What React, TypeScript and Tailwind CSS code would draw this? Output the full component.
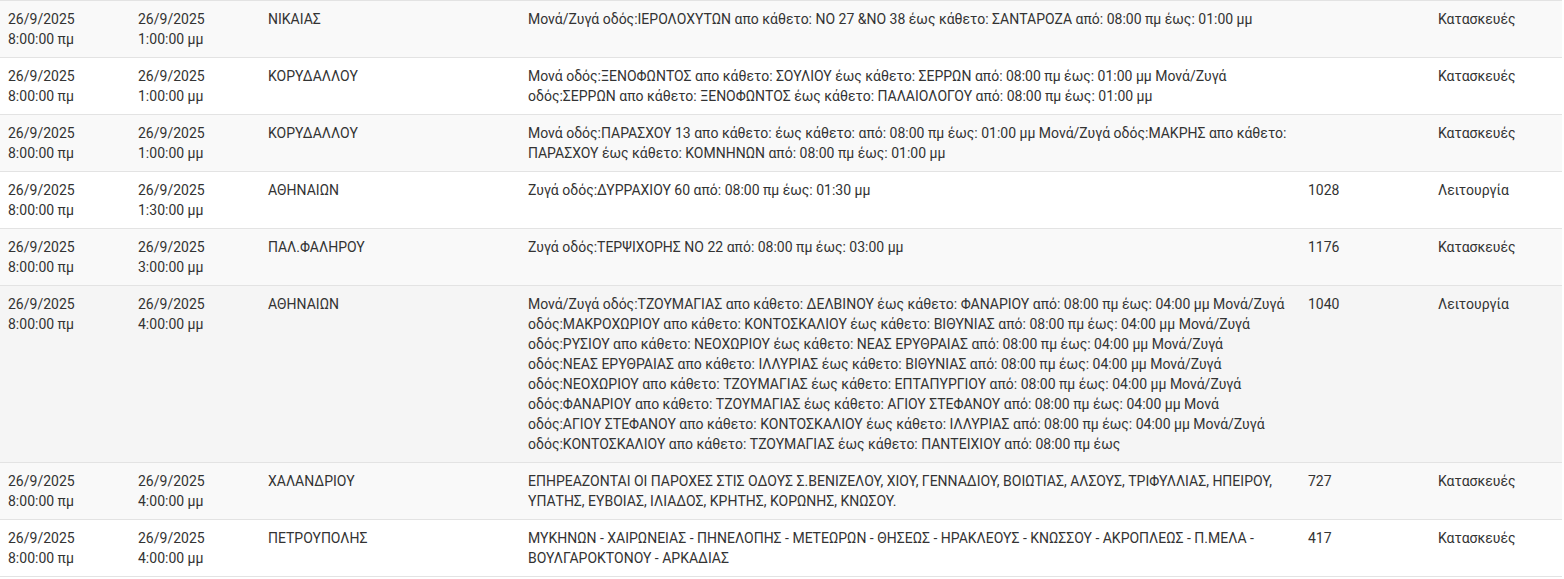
interface Outage {
    start: string;
    end: string;
    area: string;
    description: string;
    code: string;
    reason: string;
}

const outages: Outage[] = [
    {
        start: "8:00:00 πμ",
        end: "1:00:00 μμ",
        area: "ΝΙΚΑΙΑΣ",
        description: "Μονά/Ζυγά οδός:ΙΕΡΟΛΟΧΥΤΩΝ απο κάθετο: ΝΟ 27 &ΝΟ 38 έως κάθετο: ΣΑΝΤΑΡΟΖΑ από: 08:00 πμ έως: 01:00 μμ",
        code: "",
        reason: "Κατασκευές",
    },
    {
        start: "8:00:00 πμ",
        end: "1:00:00 μμ",
        area: "ΚΟΡΥΔΑΛΛΟΥ",
        description: "Μονά οδός:ΞΕΝΟΦΩΝΤΟΣ απο κάθετο: ΣΟΥΛΙΟΥ έως κάθετο: ΣΕΡΡΩΝ από: 08:00 πμ έως: 01:00 μμ Μονά/Ζυγά οδός:ΣΕΡΡΩΝ απο κάθετο: ΞΕΝΟΦΩΝΤΟΣ έως κάθετο: ΠΑΛΑΙΟΛΟΓΟΥ από: 08:00 πμ έως: 01:00 μμ",
        code: "",
        reason: "Κατασκευές",
    },
    {
        start: "8:00:00 πμ",
        end: "1:00:00 μμ",
        area: "ΚΟΡΥΔΑΛΛΟΥ",
        description: "Μονά οδός:ΠΑΡΑΣΧΟΥ 13 απο κάθετο: έως κάθετο: από: 08:00 πμ έως: 01:00 μμ Μονά/Ζυγά οδός:ΜΑΚΡΗΣ απο κάθετο: ΠΑΡΑΣΧΟΥ έως κάθετο: ΚΟΜΝΗΝΩΝ από: 08:00 πμ έως: 01:00 μμ",
        code: "",
        reason: "Κατασκευές",
    },
    {
        start: "8:00:00 πμ",
        end: "1:30:00 μμ",
        area: "ΑΘΗΝΑΙΩΝ",
        description: "Ζυγά οδός:ΔΥΡΡΑΧΙΟΥ 60 από: 08:00 πμ έως: 01:30 μμ",
        code: "1028",
        reason: "Λειτουργία",
    },
    {
        start: "8:00:00 πμ",
        end: "3:00:00 μμ",
        area: "ΠΑΛ.ΦΑΛΗΡΟΥ",
        description: "Ζυγά οδός:ΤΕΡΨΙΧΟΡΗΣ ΝΟ 22 από: 08:00 πμ έως: 03:00 μμ",
        code: "1176",
        reason: "Κατασκευές",
    },
    {
        start: "8:00:00 πμ",
        end: "4:00:00 μμ",
        area: "ΑΘΗΝΑΙΩΝ",
        description: "Μονά/Ζυγά οδός:ΤΖΟΥΜΑΓΙΑΣ απο κάθετο: ΔΕΛΒΙΝΟΥ έως κάθετο: ΦΑΝΑΡΙΟΥ από: 08:00 πμ έως: 04:00 μμ Μονά/Ζυγά οδός:ΜΑΚΡΟΧΩΡΙΟΥ απο κάθετο: ΚΟΝΤΟΣΚΑΛΙΟΥ έως κάθετο: ΒΙΘΥΝΙΑΣ από: 08:00 πμ έως: 04:00 μμ Μονά/Ζυγά οδός:ΡΥΣΙΟΥ απο κάθετο: ΝΕΟΧΩΡΙΟΥ έως κάθετο: ΝΕΑΣ ΕΡΥΘΡΑΙΑΣ από: 08:00 πμ έως: 04:00 μμ Μονά/Ζυγά οδός:ΝΕΑΣ ΕΡΥΘΡΑΙΑΣ απο κάθετο: ΙΛΛΥΡΙΑΣ έως κάθετο: ΒΙΘΥΝΙΑΣ από: 08:00 πμ έως: 04:00 μμ Μονά/Ζυγά οδός:ΝΕΟΧΩΡΙΟΥ απο κάθετο: ΤΖΟΥΜΑΓΙΑΣ έως κάθετο: ΕΠΤΑΠΥΡΓΙΟΥ από: 08:00 πμ έως: 04:00 μμ Μονά/Ζυγά οδός:ΦΑΝΑΡΙΟΥ απο κάθετο: ΤΖΟΥΜΑΓΙΑΣ έως κάθετο: ΑΓΙΟΥ ΣΤΕΦΑΝΟΥ από: 08:00 πμ έως: 04:00 μμ Μονά οδός:ΑΓΙΟΥ ΣΤΕΦΑΝΟΥ απο κάθετο: ΚΟΝΤΟΣΚΑΛΙΟΥ έως κάθετο: ΙΛΛΥΡΙΑΣ από: 08:00 πμ έως: 04:00 μμ Μονά/Ζυγά οδός:ΚΟΝΤΟΣΚΑΛΙΟΥ απο κάθετο: ΤΖΟΥΜΑΓΙΑΣ έως κάθετο: ΠΑΝΤΕΙΧΙΟΥ από: 08:00 πμ έως",
        code: "1040",
        reason: "Λειτουργία",
    },
    {
        start: "8:00:00 πμ",
        end: "4:00:00 μμ",
        area: "ΧΑΛΑΝΔΡΙΟΥ",
        description: "ΕΠΗΡΕΑΖΟΝΤΑΙ ΟΙ ΠΑΡΟΧΕΣ ΣΤΙΣ ΟΔΟΥΣ Σ.ΒΕΝΙΖΕΛΟΥ, ΧΙΟΥ, ΓΕΝΝΑΔΙΟΥ, ΒΟΙΩΤΙΑΣ, ΑΛΣΟΥΣ, ΤΡΙΦΥΛΛΙΑΣ, ΗΠΕΙΡΟΥ, ΥΠΑΤΗΣ, ΕΥΒΟΙΑΣ, ΙΛΙΑΔΟΣ, ΚΡΗΤΗΣ, ΚΟΡΩΝΗΣ, ΚΝΩΣΟΥ.",
        code: "727",
        reason: "Κατασκευές",
    },
    {
        start: "8:00:00 πμ",
        end: "4:00:00 μμ",
        area: "ΠΕΤΡΟΥΠΟΛΗΣ",
        description: "ΜΥΚΗΝΩΝ - ΧΑΙΡΩΝΕΙΑΣ - ΠΗΝΕΛΟΠΗΣ - ΜΕΤΕΩΡΩΝ - ΘΗΣΕΩΣ - ΗΡΑΚΛΕΟΥΣ - ΚΝΩΣΣΟΥ - ΑΚΡΟΠΛΕΩΣ - Π.ΜΕΛΑ - ΒΟΥΛΓΑΡΟΚΤΟΝΟΥ - ΑΡΚΑΔΙΑΣ",
        code: "417",
        reason: "Κατασκευές",
    },
];

// row backgrounds as captured (6th row is the hovered one)
const rowBg = [
    "bg-[#f9f9f9]",
    "bg-white",
    "bg-[#f9f9f9]",
    "bg-white",
    "bg-[#f9f9f9]",
    "bg-[#f5f5f5]",
    "bg-[#f9f9f9]",
    "bg-white",
];

export default function App() {
    return (
        <div className="w-[1564px] h-[579px] bg-white overflow-hidden font-['Roboto',sans-serif] text-[14px] leading-[20px] text-[#333]">
            <table className="w-[1562px] table-fixed border-collapse border-b border-[#e3e3e3]">
                <colgroup>
                    <col className="w-[130px]"/>
                    <col className="w-[130px]"/>
                    <col className="w-[260px]"/>
                    <col className="w-[780px]"/>
                    <col className="w-[130px]"/>
                    <col/>
                </colgroup>
                <tbody>
                {
                    outages.map((outage, index) => (
                        <tr key={index} className={`${rowBg[index]} border-t border-[#e3e3e3] align-top`}>
                            <td className="px-2 py-2">
                                <div>26/9/2025</div>
                                <div>{outage.start}</div>
                            </td>
                            <td className="px-2 py-2">
                                <div>26/9/2025</div>
                                <div>{outage.end}</div>
                            </td>
                            <td className="px-2 py-2">{outage.area}</td>
                            <td className="px-2 py-2">{outage.description}</td>
                            <td className="px-2 py-2">{outage.code}</td>
                            <td className="px-2 py-2">{outage.reason}</td>
                        </tr>
                    ))
                }
                </tbody>
            </table>
        </div>
    )
}
